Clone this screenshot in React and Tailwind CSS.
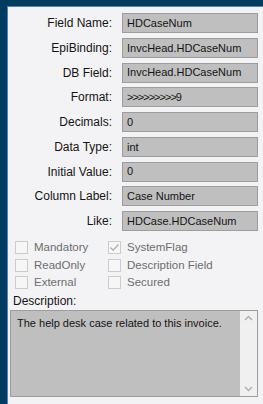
const fields = [
  { label: 'Field Name:', value: 'HDCaseNum' },
  { label: 'EpiBinding:', value: 'InvcHead.HDCaseNum' },
  { label: 'DB Field:', value: 'InvcHead.HDCaseNum' },
  { label: 'Format:', value: '>>>>>>>>>9', tight: true },
  { label: 'Decimals:', value: '0' },
  { label: 'Data Type:', value: 'int' },
  { label: 'Initial Value:', value: '0' },
  { label: 'Column Label:', value: 'Case Number' },
  { label: 'Like:', value: 'HDCase.HDCaseNum' },
];

const flags = [
  { label: 'Mandatory', checked: false },
  { label: 'SystemFlag', checked: true },
  { label: 'ReadOnly', checked: false },
  { label: 'Description Field', checked: false },
  { label: 'External', checked: false },
  { label: 'Secured', checked: false },
];

const CheckBox = ({ label, checked }) => (
  <div className="flex items-center h-[17.5px]">
    <div className="w-[13px] h-[13px] border border-[#cccccc] bg-[#f6f6f6] flex items-center justify-center">
      {checked && (
        <svg width="11" height="11" viewBox="0 0 11 11">
          <path d="M1.5 5.5 L4.2 8.2 L9.5 2.5" fill="none" stroke="#a8a8a8" strokeWidth="1.2" />
        </svg>
      )}
    </div>
    <span className="ml-[6px] text-[11.5px] text-[#6d6d6d]">{label}</span>
  </div>
);

export default function App() {
  return (
    <div
      className="w-[263px] h-[404px] bg-[#033c5f] pt-[6px] pl-[7px] overflow-hidden"
      style={{ fontFamily: '"Liberation Sans", Arial, sans-serif' }}
    >
      <div className="h-full border-l border-t border-[#4a86bf] bg-[#f3f3f5] pt-[6px]">
        {/* Campos */}
        <div className="flex flex-col gap-[4.75px]">
          {fields.map((f) => (
            <div key={f.label} className="flex items-center">
              <div className="w-[104px] text-right text-[12px] text-[#141414] leading-none">
                {f.label}
              </div>
              <div
                className={`ml-[10px] w-[136px] h-[20px] bg-[#bfbfbf] border border-[#9d9d9d] flex items-center pl-[4px] text-[11px] text-[#141414] whitespace-nowrap overflow-hidden ${
                  f.tight ? 'tracking-[-1px]' : ''
                }`}
              >
                {f.value}
              </div>
            </div>
          ))}
        </div>

        {/* Flags */}
        <div className="grid grid-cols-[93px_1fr] pl-[7px] mt-[8px]">
          {flags.map((c) => (
            <CheckBox key={c.label} label={c.label} checked={c.checked} />
          ))}
        </div>

        {/* Descripción */}
        <div className="pl-[5px] mt-[1px] text-[12px] text-[#141414] leading-[17px]">Description:</div>
        <div className="ml-[2px] w-[248px] h-[87px] bg-[#bfbfbf] border border-[#9d9d9d] flex">
          <div className="flex-1 pl-[6px] pt-[4px] text-[11px] text-[#141414]">
            The help desk case related to this invoice.
          </div>
          <div className="w-[17px] bg-[#f0f0f0] flex flex-col justify-between items-center py-[4px]">
            <svg width="9" height="6" viewBox="0 0 9 6">
              <path d="M1 5 L4.5 1.5 L8 5" fill="none" stroke="#b0b0b0" strokeWidth="1.5" />
            </svg>
            <svg width="9" height="6" viewBox="0 0 9 6">
              <path d="M1 1 L4.5 4.5 L8 1" fill="none" stroke="#b0b0b0" strokeWidth="1.5" />
            </svg>
          </div>
        </div>
      </div>
    </div>
  );
}
